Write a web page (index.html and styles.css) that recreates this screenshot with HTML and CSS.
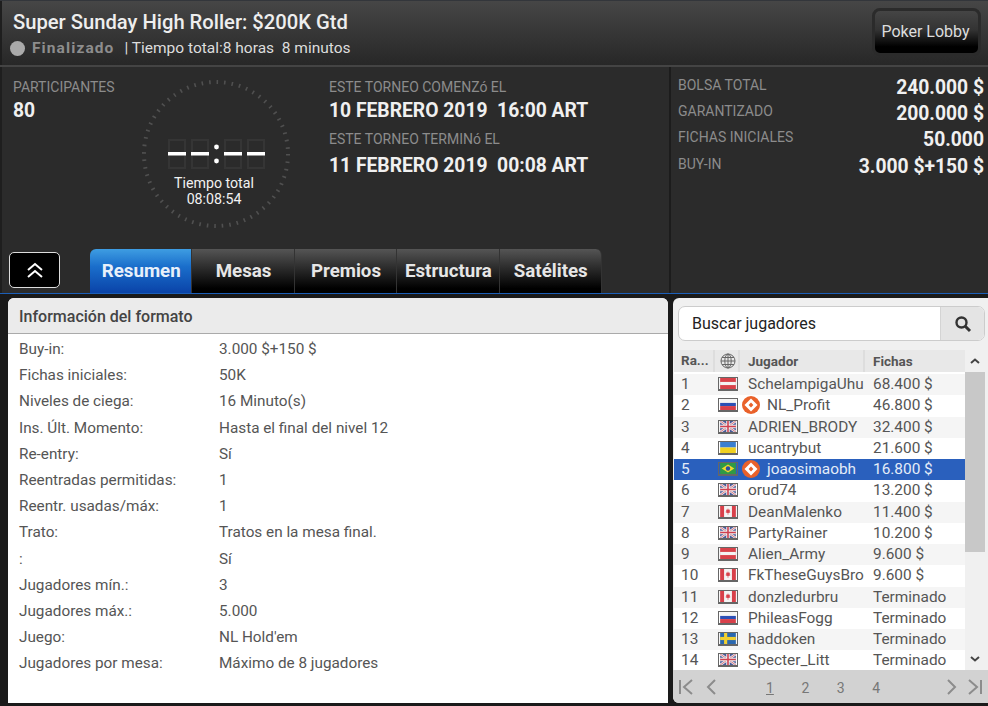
FILE: index.html
```html
<!DOCTYPE html>
<html lang="es">
<head>
    <meta charset="UTF-8">
    <meta name="viewport" content="width=device-width, initial-scale=1.0">
    <title>Super Sunday High Roller</title>
    <link rel="stylesheet" href="styles.css">
</head>
<body>

    <svg class="defs" width="0" height="0">
        <defs>
            <symbol id="flag-at" viewBox="0 0 20 14"><rect width="20" height="14" fill="#d8424a"/><rect y="5" width="20" height="4" fill="#f4f4f4"/></symbol>
            <symbol id="flag-ru" viewBox="0 0 20 14"><rect width="20" height="14" fill="#f4f4f4"/><rect y="5" width="20" height="4" fill="#2b4fb5"/><rect y="9" width="20" height="5" fill="#d8404a"/></symbol>
            <symbol id="flag-gb" viewBox="0 0 20 14"><rect width="20" height="14" fill="#4a5a9a"/><path d="M0 0L20 14M20 0L0 14" stroke="#eee" stroke-width="3"/><path d="M0 0L20 14M20 0L0 14" stroke="#d05060" stroke-width="1"/><path d="M10 0V14M0 7H20" stroke="#eee" stroke-width="4.5"/><path d="M10 0V14M0 7H20" stroke="#d04050" stroke-width="2"/></symbol>
            <symbol id="flag-ua" viewBox="0 0 20 14"><rect width="20" height="7" fill="#3a7fd0"/><rect y="7" width="20" height="7" fill="#f0d020"/></symbol>
            <symbol id="flag-br" viewBox="0 0 20 14"><rect width="20" height="14" fill="#2f9a45"/><path d="M10 2L18 7L10 12L2 7Z" fill="#f2d92e"/><circle cx="10" cy="7" r="2.8" fill="#2a4f9e"/></symbol>
            <symbol id="flag-ca" viewBox="0 0 20 14"><rect width="20" height="14" fill="#f4f4f4"/><rect width="5" height="14" fill="#d8404a"/><rect x="15" width="5" height="14" fill="#d8404a"/><path d="M10 3L11 5L12.5 4.6L12 7L13.2 7.2L12.6 8.4L10.4 9V11H9.6V9L7.4 8.4L6.8 7.2L8 7L7.5 4.6L9 5Z" fill="#d8404a"/></symbol>
            <symbol id="flag-se" viewBox="0 0 20 14"><rect width="20" height="14" fill="#2a68b0"/><rect x="5" width="4" height="14" fill="#f2d030"/><rect y="5" width="20" height="4" fill="#f2d030"/></symbol>
            <symbol id="pro" viewBox="0 0 18 18"><circle cx="9" cy="9" r="9" fill="#e9612a"/><path d="M9 2.5L15.5 9L9 15.5L2.5 9Z" fill="#fff"/><path d="M9 6.6L11.4 9L9 11.4L6.6 9Z" fill="#e9612a"/></symbol>
        </defs>
    </svg>

    <div class="app">
        <!-- cabecera -->
        <header class="header">
            <div class="header-text">
                <h1>Super Sunday High Roller: $200K Gtd</h1>
                <div class="status">
                    <span class="status-dot"></span>
                    <span class="status-name">Finalizado</span>
                    <span class="status-time">| Tiempo total:8 horas&nbsp; 8 minutos</span>
                </div>
            </div>
            <button class="lobby-btn" type="button">Poker Lobby</button>
        </header>

        <!-- resumen del torneo -->
        <section class="info">
            <div class="info-main">
                <div class="info-top">
                    <div class="players">
                        <div class="label">PARTICIPANTES</div>
                        <div class="value">80</div>
                    </div>
                    <div class="dial">
                        <svg class="dial-art" width="152" height="152" viewBox="0 0 152 152">
                            <circle cx="76" cy="76" r="72" fill="none" stroke="#505050" stroke-width="4" stroke-dasharray="1.6 5.94"/>
                            <g fill="none" stroke="#353535" stroke-width="2">
                                <rect x="29" y="62" width="16" height="28"/>
                                <rect x="52" y="62" width="16" height="28"/>
                                <rect x="85" y="62" width="16" height="28"/>
                                <rect x="108" y="62" width="16" height="28"/>
                            </g>
                            <g fill="#fff">
                                <rect x="28" y="74" width="18" height="3.5"/>
                                <rect x="51" y="74" width="18" height="3.5"/>
                                <rect x="84" y="74" width="18" height="3.5"/>
                                <rect x="107" y="74" width="18" height="3.5"/>
                                <circle cx="76.5" cy="69" r="2.4"/>
                                <circle cx="76.5" cy="83" r="2.4"/>
                            </g>
                        </svg>
                        <div class="dial-text">Tiempo total<br>08:08:54</div>
                    </div>
                    <div class="dates">
                        <div class="label">ESTE TORNEO COMENZó EL</div>
                        <div class="value date-value">10 FEBRERO 2019&nbsp; 16:00 ART</div>
                        <div class="label">ESTE TORNEO TERMINó EL</div>
                        <div class="value date-value date-end">11 FEBRERO 2019&nbsp; 00:08 ART</div>
                    </div>
                </div>
                <div class="tabs-row">
                    <button class="collapse-btn" type="button">
                        <svg width="18" height="16" viewBox="0 0 18 16" fill="none" stroke="#fff" stroke-width="2"><path d="M2 8L9 2L16 8"/><path d="M2 15L9 9L16 15"/></svg>
                    </button>
                    <nav class="tabs">
                        <a class="tab active">Resumen</a>
                        <a class="tab">Mesas</a>
                        <a class="tab">Premios</a>
                        <a class="tab">Estructura</a>
                        <a class="tab">Satélites</a>
                    </nav>
                </div>
            </div>
            <div class="stats">
                <div class="stat"><span class="label">BOLSA TOTAL</span><span class="value">240.000 $</span></div>
                <div class="stat"><span class="label">GARANTIZADO</span><span class="value">200.000 $</span></div>
                <div class="stat"><span class="label">FICHAS INICIALES</span><span class="value">50.000</span></div>
                <div class="stat"><span class="label">BUY-IN</span><span class="value">3.000 $+150 $</span></div>
            </div>
        </section>

        <main class="content">
            <!-- informacion del formato -->
            <section class="format">
                <h2>Información del formato</h2>
                <dl class="format-list">
                    <dt>Buy-in:</dt><dd>3.000 $+150 $</dd>
                    <dt>Fichas iniciales:</dt><dd>50K</dd>
                    <dt>Niveles de ciega:</dt><dd>16 Minuto(s)</dd>
                    <dt>Ins. Últ. Momento:</dt><dd>Hasta el final del nivel 12</dd>
                    <dt>Re-entry:</dt><dd>Sí</dd>
                    <dt>Reentradas permitidas:</dt><dd>1</dd>
                    <dt>Reentr. usadas/máx:</dt><dd>1</dd>
                    <dt>Trato:</dt><dd>Tratos en la mesa final.</dd>
                    <dt>:</dt><dd>Sí</dd>
                    <dt>Jugadores mín.:</dt><dd>3</dd>
                    <dt>Jugadores máx.:</dt><dd>5.000</dd>
                    <dt>Juego:</dt><dd>NL Hold'em</dd>
                    <dt>Jugadores por mesa:</dt><dd>Máximo de 8 jugadores</dd>
                </dl>
            </section>

            <!-- lista de jugadores -->
            <aside class="players-panel">
                <div class="search">
                    <span class="search-text">Buscar jugadores</span>
                    <span class="search-btn">
                        <svg width="18" height="18" viewBox="0 0 18 18" fill="none" stroke="#333"><circle cx="7.5" cy="7.5" r="5" stroke-width="2.4"/><path d="M11.5 11.5L16 16" stroke-width="3"/></svg>
                    </span>
                </div>
                <div class="table-wrap">
                    <div class="table">
                        <div class="row head">
                            <span class="c-rank">Ra...</span>
                            <span class="c-flag">
                                <svg width="16" height="16" viewBox="0 0 16 16" fill="none" stroke="#666"><circle cx="8" cy="8" r="7"/><ellipse cx="8" cy="8" rx="3.2" ry="7"/><path d="M1 8H15M2 4.5H14M2 11.5H14M8 1V15"/></svg>
                            </span>
                            <span class="c-name">Jugador</span>
                            <span class="c-chips">Fichas</span>
                        </div>
                        <div class="row"><span class="c-rank">1</span><span class="c-flag"><svg class="flag"><use href="#flag-at"/></svg></span><span class="c-name">SchelampigaUhu</span><span class="c-chips">68.400 $</span></div>
                        <div class="row"><span class="c-rank">2</span><span class="c-flag"><svg class="flag"><use href="#flag-ru"/></svg></span><span class="c-name pro-name"><svg class="pro"><use href="#pro"/></svg>NL_Profit</span><span class="c-chips">46.800 $</span></div>
                        <div class="row"><span class="c-rank">3</span><span class="c-flag"><svg class="flag"><use href="#flag-gb"/></svg></span><span class="c-name">ADRIEN_BRODY</span><span class="c-chips">32.400 $</span></div>
                        <div class="row"><span class="c-rank">4</span><span class="c-flag"><svg class="flag"><use href="#flag-ua"/></svg></span><span class="c-name">ucantrybut</span><span class="c-chips">21.600 $</span></div>
                        <div class="row selected"><span class="c-rank">5</span><span class="c-flag"><svg class="flag"><use href="#flag-br"/></svg></span><span class="c-name pro-name"><svg class="pro"><use href="#pro"/></svg>joaosimaobh</span><span class="c-chips">16.800 $</span></div>
                        <div class="row"><span class="c-rank">6</span><span class="c-flag"><svg class="flag"><use href="#flag-gb"/></svg></span><span class="c-name">orud74</span><span class="c-chips">13.200 $</span></div>
                        <div class="row"><span class="c-rank">7</span><span class="c-flag"><svg class="flag"><use href="#flag-ca"/></svg></span><span class="c-name">DeanMalenko</span><span class="c-chips">11.400 $</span></div>
                        <div class="row"><span class="c-rank">8</span><span class="c-flag"><svg class="flag"><use href="#flag-gb"/></svg></span><span class="c-name">PartyRainer</span><span class="c-chips">10.200 $</span></div>
                        <div class="row"><span class="c-rank">9</span><span class="c-flag"><svg class="flag"><use href="#flag-at"/></svg></span><span class="c-name">Alien_Army</span><span class="c-chips">9.600 $</span></div>
                        <div class="row"><span class="c-rank">10</span><span class="c-flag"><svg class="flag"><use href="#flag-ca"/></svg></span><span class="c-name">FkTheseGuysBro</span><span class="c-chips">9.600 $</span></div>
                        <div class="row"><span class="c-rank">11</span><span class="c-flag"><svg class="flag"><use href="#flag-ca"/></svg></span><span class="c-name">donzledurbru</span><span class="c-chips">Terminado</span></div>
                        <div class="row"><span class="c-rank">12</span><span class="c-flag"><svg class="flag"><use href="#flag-ru"/></svg></span><span class="c-name">PhileasFogg</span><span class="c-chips">Terminado</span></div>
                        <div class="row"><span class="c-rank">13</span><span class="c-flag"><svg class="flag"><use href="#flag-se"/></svg></span><span class="c-name">haddoken</span><span class="c-chips">Terminado</span></div>
                        <div class="row"><span class="c-rank">14</span><span class="c-flag"><svg class="flag"><use href="#flag-gb"/></svg></span><span class="c-name">Specter_Litt</span><span class="c-chips">Terminado</span></div>
                    </div>
                    <div class="scrollbar">
                        <span class="scroll-btn"><svg width="10" height="6" viewBox="0 0 10 6" fill="none" stroke="#444" stroke-width="2"><path d="M1 5L5 1.5L9 5"/></svg></span>
                        <span class="scroll-thumb"></span>
                        <span class="scroll-rest"></span>
                        <span class="scroll-btn end"><svg width="10" height="6" viewBox="0 0 10 6" fill="none" stroke="#444" stroke-width="2"><path d="M1 1L5 4.5L9 1"/></svg></span>
                    </div>
                </div>
                <div class="pager">
                    <svg width="16" height="16" viewBox="0 0 16 16" fill="none" stroke="#8c8c8c" stroke-width="2"><path d="M2 1V15M14 1L6 8L14 15"/></svg>
                    <svg class="pager-prev" width="10" height="16" viewBox="0 0 10 16" fill="none" stroke="#8c8c8c" stroke-width="2"><path d="M9 1L2 8L9 15"/></svg>
                    <div class="pages"><a class="page current">1</a><a class="page">2</a><a class="page">3</a><a class="page">4</a></div>
                    <svg class="pager-next" width="10" height="16" viewBox="0 0 10 16" fill="none" stroke="#8c8c8c" stroke-width="2"><path d="M1 1L8 8L1 15"/></svg>
                    <svg width="16" height="16" viewBox="0 0 16 16" fill="none" stroke="#8c8c8c" stroke-width="2"><path d="M14 1V15M2 1L10 8L2 15"/></svg>
                </div>
            </aside>
        </main>
    </div>

</body>
</html>
```

FILE: styles.css
```css
* { box-sizing: border-box; }
html, body { margin: 0; padding: 0; }
body { width: 988px; height: 706px; overflow: hidden; background: #1a1a1a; font-family: Roboto, "Liberation Sans", sans-serif; }
.defs { display: block; }
.app { display: flex; flex-direction: column; height: 706px; }

.header { height: 67px; display: flex; justify-content: space-between; padding: 1px 7px 0 13px; background: linear-gradient(#464646, #272727); border-top: 1px solid #33363b; border-bottom: 2px solid #444; box-shadow: inset 2px 0 0 #1e1e1e; }
.header h1 { margin: 9px 0 0; font-size: 20.2px; line-height: 22px; font-weight: 500; color: #eee; }
.status { display: flex; align-items: center; margin-top: 6px; margin-left: -3px; font-size: 15.5px; line-height: 18px; color: #ddd; }
.status-dot { width: 15px; height: 15px; border-radius: 50%; background: #aaa; margin-right: 7px; }
.status-name { font-weight: 700; color: #8d8d8d; letter-spacing: 1.1px; margin-right: 10px; }
.lobby-btn { width: 109px; height: 48px; margin-top: 6px; border: 3px solid #2b2b2b; border-radius: 8px; background: linear-gradient(#454545, #333 45%, #000 85%); color: #ddd; font: 400 16px Roboto, sans-serif; padding: 0 2px 2px 0; }

.info { height: 226px; display: flex; background: #2b2b2b; box-shadow: inset 2px 0 0 #1e1e1e; }
.info-main { width: 669px; display: flex; flex-direction: column; justify-content: space-between; }
.info-top { display: flex; }
.label { font-size: 14px; line-height: 16px; color: #8c8c8c; }
.value { font-size: 19.3px; line-height: 22px; font-weight: 700; color: #f0f0f0; }
.players { width: 140px; padding: 12px 0 0 13px; }
.players .value { margin-top: 5px; }
.dial { display: grid; width: 152px; height: 152px; margin-top: 11px; place-items: center; }
.dial-art, .dial-text { grid-area: 1 / 1; }
.dial-text { margin-top: 73px; text-align: center; font-size: 14.2px; line-height: 16px; color: #f2f2f2; padding-right: 4px; }
.dates { padding: 12px 0 0 37px; }
.date-value { margin: 5px 0 9px; }
.date-end { margin-top: 8px; }

.tabs-row { display: flex; align-items: flex-start; padding-left: 9px; }
.collapse-btn { width: 51px; height: 36px; margin-top: 3px; background: #000; border: 1px solid #ddd; border-radius: 5px; display: flex; align-items: center; justify-content: center; padding: 0; }
.tabs { display: flex; margin-left: 30px; }
.tab { width: 102.4px; height: 44px; padding-left: 1px; display: flex; align-items: center; justify-content: center; font-size: 18.7px; font-weight: 700; color: #e6e6e6; background: linear-gradient(#555, #333 35%, #000 90%); border-right: 1px solid #333; }
.tab:last-child { border-radius: 0 6px 0 0; }
.tab.active { background: linear-gradient(#3e9de2, #1a6ecb 40%, #0a43a8); color: #e8f0fa; border-radius: 6px 0 0 0; }

.stats { flex: 1; padding: 10px 4px 0 7px; border-left: 2px solid #1c1c1c; }
.stat { display: flex; justify-content: space-between; height: 26.2px; }

.content { flex: 1; display: flex; gap: 5px; padding: 4px 0 3px 8px; border-top: 1px solid #1c5fb8; }
.format { width: 660px; background: #fff; border-radius: 6px 6px 0 0; }
.format h2 { margin: 0; height: 36px; padding: 1px 11px 0; display: flex; align-items: center; background: #ebebeb; border-bottom: 1px solid #aaa; border-radius: 6px 6px 0 0; font-size: 16px; font-weight: 500; color: #444; }
.format-list { margin: 2px 0 0; display: grid; grid-template-columns: 200px 1fr; grid-auto-rows: 26.2px; padding-left: 11px; font-size: 15.3px; line-height: 26px; color: #555; }
.format-list dt, .format-list dd { margin: 0; }

.players-panel { flex: 1; display: flex; flex-direction: column; background: #f0f0f0; border-radius: 6px 0 0 6px; overflow: hidden; }
.search { height: 35px; margin: 8px 3px 0 5px; display: flex; background: #fff; border: 1px solid #ccc; border-radius: 7px; overflow: hidden; }
.search-text { flex: 1; padding-left: 13px; font-size: 16px; line-height: 33px; color: #222; }
.search-btn { width: 44px; display: flex; align-items: center; justify-content: center; background: #e4e4e4; border-left: 1px solid #d4d4d4; }
.table-wrap { display: flex; margin-top: 9px; height: 320px; overflow: hidden; }
.table { width: 292px; margin-left: 1px; background: #fff; }
.row { height: 21.25px; padding-bottom: 1px; display: flex; align-items: center; font-size: 15.4px; color: #555; white-space: nowrap; }
.row:nth-child(even) { background: #f5f5f5; }
.row.head { height: 22px; margin-bottom: 2px; padding-bottom: 0; background: #e8e8e8; font-size: 13.5px; font-weight: 700; color: #555; }
.row.selected { background: #2a60bd; color: #e4ecf8; }
.c-rank { width: 41px; padding-left: 7px; }
.c-flag { width: 25px; display: flex; align-items: center; }
.head .c-rank, .head .c-flag, .head .c-name { height: 22px; line-height: 21px; border-right: 2px solid #ddd; }
.head .c-flag { padding-left: 5px; }
.c-name { width: 125px; padding-left: 8px; white-space: nowrap; display: flex; align-items: center; }
.flag { width: 20px; height: 14px; border: 1px solid #666; border-bottom-width: 2px; box-sizing: border-box; margin-left: 3px; }
.pro { width: 18px; height: 18px; margin: 0 7px 0 -6px; flex: none; }
.c-chips { flex: 1; padding-left: 8px; }
.scrollbar { width: 20px; display: flex; flex-direction: column; background: #f0f0f0; margin-right: 3px; }
.scroll-btn { height: 22px; flex: none; display: flex; align-items: center; justify-content: center; }
.scroll-thumb { height: 180px; flex: none; background: #c8c8c8; }
.scroll-rest { flex: 1; }
.pager { height: 33px; flex: none; margin-top: auto; display: flex; align-items: center; padding: 0 5px; background: #d2d2d2; }
.pager-prev { margin-left: 12px; }
.pages { flex: 1; display: flex; padding-left: 50px; padding-top: 3px; gap: 27.5px; font-size: 14px; color: #777; }
.page.current { text-decoration: underline; }
.pager-next { margin-right: 10px; }
```
